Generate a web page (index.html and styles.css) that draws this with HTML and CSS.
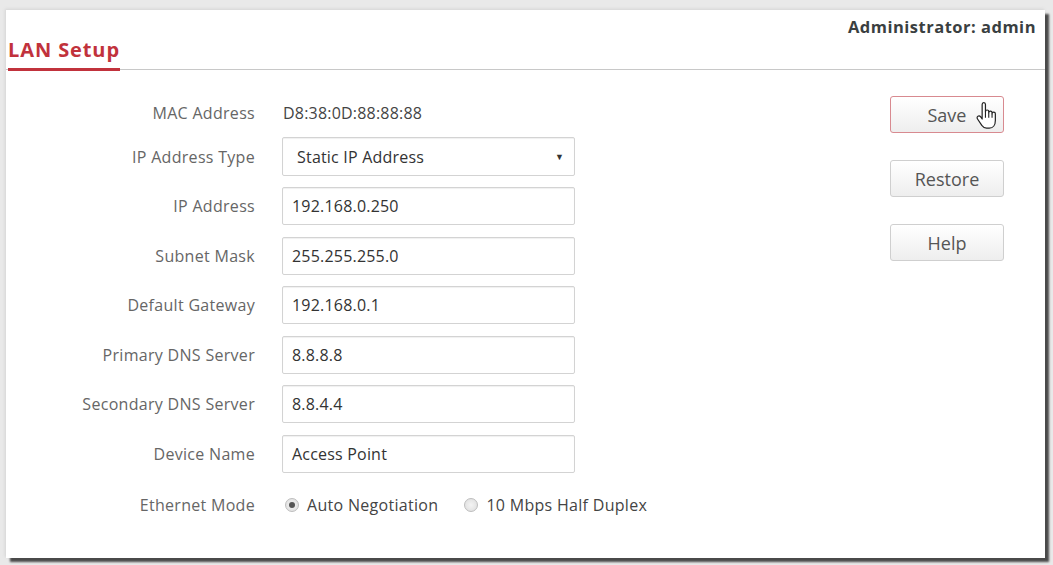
FILE: index.html
```html
<!DOCTYPE html>
<html>
<head>
<meta charset="utf-8">
<title>LAN Setup</title>
<link rel="stylesheet" href="styles.css">
</head>
<body>
<div class="panel">
  <div class="header">
    <div class="title">LAN Setup</div>
    <div class="admin">Administrator: admin</div>
  </div>
  <div class="main">
    <div class="form">
      <div class="row row-short">
        <div class="label">MAC Address</div>
        <div class="value">D8:38:0D:88:88:88</div>
      </div>
      <div class="row">
        <div class="label">IP Address Type</div>
        <div class="select"><span>Static IP Address</span><span class="caret">▼</span></div>
      </div>
      <div class="row">
        <div class="label">IP Address</div>
        <div class="input">192.168.0.250</div>
      </div>
      <div class="row">
        <div class="label">Subnet Mask</div>
        <div class="input">255.255.255.0</div>
      </div>
      <div class="row">
        <div class="label">Default Gateway</div>
        <div class="input">192.168.0.1</div>
      </div>
      <div class="row">
        <div class="label">Primary DNS Server</div>
        <div class="input">8.8.8.8</div>
      </div>
      <div class="row">
        <div class="label">Secondary DNS Server</div>
        <div class="input">8.8.4.4</div>
      </div>
      <div class="row">
        <div class="label">Device Name</div>
        <div class="input">Access Point</div>
      </div>
      <div class="row row-radio">
        <div class="label">Ethernet Mode</div>
        <div class="radios">
          <span class="radio-item"><span class="radio checked"></span>Auto Negotiation</span>
          <span class="radio-item"><span class="radio"></span>10 Mbps Half Duplex</span>
        </div>
      </div>
    </div>
    <div class="buttons">
      <div class="btn btn-save">Save
        <svg class="hand" viewBox="0 0 20 26" width="22" height="29">
          <path d="M6.5 14 V3 C6.5 2 7.1 1.2 8 1.2 C8.9 1.2 9.5 2 9.5 3 V9.5 C9.5 8.7 10.1 8 11 8 C11.9 8 12.5 8.7 12.5 9.5 V10.5 C12.5 9.7 13.1 9 14 9 C14.9 9 15.5 9.7 15.5 10.5 V11.5 C15.5 10.7 16.1 10 17 10 C17.9 10 18.5 10.7 18.5 11.5 V17.5 C18.5 21.5 16.5 24.5 13 24.5 H10.5 C8.5 24.5 7.3 23.5 6.2 22 L2.3 16.2 C1.6 15.2 1.9 14.1 2.7 13.6 C3.5 13.1 4.5 13.4 5.2 14.3 L6.5 16.2 Z" fill="#fff" stroke="#222" stroke-width="1.1" stroke-linejoin="round"/>
          <path d="M9.5 9.5 V15 M12.5 10.5 V15 M15.5 11.5 V15" fill="none" stroke="#222" stroke-width="1"/>
        </svg>
      </div>
      <div class="btn">Restore</div>
      <div class="btn">Help</div>
    </div>
  </div>
</div>
</body>
</html>
```

FILE: styles.css
```css
html, body {
  margin: 0;
  padding: 0;
}
body {
  background: #e9e9e9;
  font-family: "Open Sans", "Noto Sans", sans-serif;
  width: 1053px;
  height: 565px;
  overflow: hidden;
}
.panel {
  margin: 10px 8px 0 6px;
  height: 548px;
  background: #fff;
  box-shadow: 4px 4px 2px #4a4a4a, -1px -1px 3px #d4d4d4;
  box-sizing: border-box;
}
.header {
  position: relative;
  height: 59px;
  border-bottom: 1px solid #c8c8c8;
  padding-left: 2px;
  display: flex;
  align-items: flex-end;
  justify-content: space-between;
}
.title {
  font-weight: 700;
  font-size: 20px;
  color: #c1323c;
  line-height: 24px;
  padding-bottom: 6px;
  width: 112px;
  border-bottom: 3px solid #c1323c;
  margin-bottom: -2px;
  letter-spacing: 0.9px;
  white-space: nowrap;
}
.admin {
  align-self: flex-start;
  margin-top: 5px;
  margin-right: 9px;
  font-weight: 700;
  font-size: 16.5px;
  letter-spacing: 0.5px;
  color: #3a3f41;
}
.main {
  display: flex;
  padding-top: 29px;
}
.form {
  flex: 1;
  display: flex;
  flex-direction: column;
  gap: 11.5px;
}
.row {
  display: flex;
  align-items: center;
  height: 38px;
}
.row-short {
  height: 27px;
}
.label {
  width: 249px;
  text-align: right;
  font-size: 16px;
  letter-spacing: 0.3px;
  color: #666;
  margin-right: 27px;
  flex: none;
  white-space: nowrap;
}
.value {
  font-size: 16px;
  letter-spacing: 0.2px;
  color: #444;
  padding-left: 1px;
}
.input, .select {
  box-sizing: border-box;
  width: 293px;
  height: 38px;
  border: 1px solid #d3d3d3;
  border-radius: 2px;
  font-size: 16px;
  letter-spacing: 0.2px;
  color: #333;
  display: flex;
  align-items: center;
  padding-left: 9px;
  box-shadow: inset 0 1px 1px #f0f0f0;
}
.select {
  height: 39px;
  padding-left: 14px;
  padding-right: 10px;
  justify-content: space-between;
}
.caret {
  font-size: 9px;
  color: #333;
}
.row-radio {
  margin-top: 2px;
}
.radios {
  display: flex;
  gap: 26px;
  font-size: 16px;
  letter-spacing: 0.3px;
  color: #444;
  padding-left: 3px;
  white-space: nowrap;
}
.radio-item {
  display: flex;
  align-items: center;
}
.radio {
  width: 12px;
  height: 12px;
  border-radius: 50%;
  border: 1px solid #bdbdbd;
  background: radial-gradient(circle, #f4f4f4 0, #dcdcdc 100%);
  margin-right: 8px;
  position: relative;
}
.radio.checked::after {
  content: "";
  position: absolute;
  left: 3px;
  top: 3px;
  width: 6px;
  height: 6px;
  border-radius: 50%;
  background: #555;
}
.buttons {
  display: flex;
  flex-direction: column;
  gap: 27px;
  margin-right: 41px;
  margin-top: -3px;
}
.btn {
  position: relative;
  box-sizing: border-box;
  width: 114px;
  height: 37px;
  border: 1px solid #cfcfcf;
  border-radius: 3px;
  background: linear-gradient(#ffffff, #eeeeee);
  font-size: 18px;
  color: #555;
  display: flex;
  align-items: center;
  justify-content: center;
}
.btn-save {
  border-color: #d88a90;
}
.hand {
  position: absolute;
  left: 84px;
  top: 4px;
}
```
